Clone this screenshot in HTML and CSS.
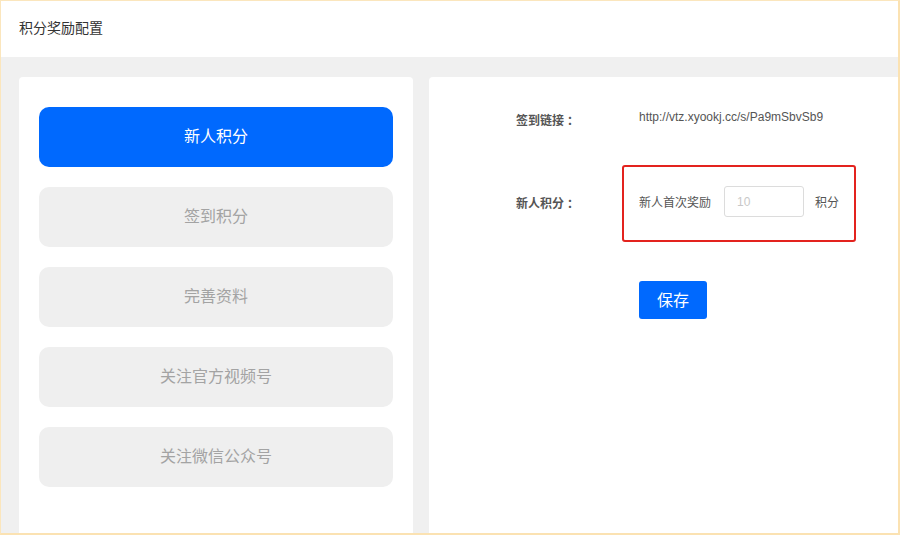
FILE: index.html
```html
<!DOCTYPE html>
<html lang="zh-CN">
<head>
<meta charset="utf-8">
<title>积分奖励配置</title>
<link rel="stylesheet" href="styles.css">
</head>
<body>
<div class="frame">
  <header class="topbar">积分奖励配置</header>
  <main class="content">
    <nav class="side-card">
      <button class="tab tab-active">新人积分</button>
      <button class="tab">签到积分</button>
      <button class="tab">完善资料</button>
      <button class="tab">关注官方视频号</button>
      <button class="tab">关注微信公众号</button>
    </nav>
    <section class="form-card">
      <div class="form-row row-link">
        <div class="label">签到链接<span class="colon">：</span></div>
        <div class="link">http://vtz.xyookj.cc/s/Pa9mSbvSb9</div>
      </div>
      <div class="form-row row-points">
        <div class="label">新人积分<span class="colon">：</span></div>
        <div class="highlight">
          <span class="text">新人首次奖励</span>
          <input class="num-input" type="text" placeholder="10">
          <span class="text">积分</span>
        </div>
      </div>
      <div class="form-row row-save">
        <div class="label"></div>
        <button class="save-btn">保存</button>
      </div>
    </section>
  </main>
</div>
</body>
</html>
```

FILE: styles.css
```css
html, body {
  margin: 0;
  padding: 0;
}
body {
  font-family: "Liberation Sans", "Noto Sans CJK SC", sans-serif;
  background: #ffffff;
}
.frame {
  width: 900px;
  height: 535px;
  box-sizing: border-box;
  border-top: 1px solid #fbe6bd;
  border-left: 1px solid #fbe6bd;
  border-right: 2px solid #fbe2b2;
  border-bottom: 2px solid #fbe2b2;
  display: flex;
  flex-direction: column;
  overflow: hidden;
}
.topbar {
  height: 56px;
  flex: none;
  box-sizing: border-box;
  display: flex;
  align-items: center;
  padding: 0 0 5px 18px;
  font-family: "Noto Sans CJK SC", sans-serif;
  font-size: 14px;
  color: #333333;
  background: #ffffff;
}
.content {
  flex: 1;
  background: #f0f0f0;
  display: flex;
  gap: 16px;
  padding: 20px 0 0 18px;
  min-height: 0;
}
.side-card {
  width: 394px;
  flex: none;
  box-sizing: border-box;
  background: #ffffff;
  border-radius: 4px 4px 0 0;
  padding: 30px 20px;
  display: flex;
  flex-direction: column;
  gap: 20px;
}
.tab {
  height: 60px;
  border: none;
  border-radius: 10px;
  background: #efefef;
  color: #a3a3a3;
  font-family: "Noto Sans CJK SC", sans-serif;
  font-size: 16px;
  padding: 0 0 4px;
  cursor: pointer;
}
.tab-active {
  background: #0069fe;
  color: #ffffff;
}
.form-card {
  flex: 1;
  background: #ffffff;
  border-radius: 4px 0 0 0;
  padding: 33px 0 0 87px;
  display: flex;
  flex-direction: column;
}
.form-row {
  display: flex;
  align-items: center;
}
.label {
  width: 123px;
  flex: none;
  font-family: "Noto Sans CJK SC", sans-serif;
  font-size: 12px;
  font-weight: bold;
  color: #555555;
  padding-bottom: 2px;
}
.colon {
  padding-left: 3px;
}
.row-link {
  height: 20px;
}
.link {
  font-size: 12px;
  color: #555555;
  margin-top: -6px;
}
.row-points {
  margin-top: 35px;
}
.highlight {
  margin-left: -17px;
  height: 77px;
  box-sizing: border-box;
  border: 2px solid #e3231e;
  border-radius: 3px;
  padding: 0 15px 4px;
  display: flex;
  align-items: center;
}
.text {
  font-family: "Noto Sans CJK SC", sans-serif;
  font-size: 12px;
  color: #555555;
}
.num-input {
  width: 80px;
  height: 31px;
  box-sizing: border-box;
  margin: 0 11px 0 13px;
  border: 1px solid #dcdcdc;
  border-radius: 3px;
  padding: 0 12px;
  font-family: "Liberation Sans", sans-serif;
  font-size: 12px;
  color: #333333;
}
.num-input::placeholder {
  color: #c8c8c8;
}
.row-save {
  margin-top: 39px;
}
.save-btn {
  width: 68px;
  height: 38px;
  border: none;
  border-radius: 3px;
  background: #0069fe;
  color: #ffffff;
  font-family: "Noto Sans CJK SC", sans-serif;
  font-size: 16px;
  padding: 0 0 3px;
  cursor: pointer;
}
```
